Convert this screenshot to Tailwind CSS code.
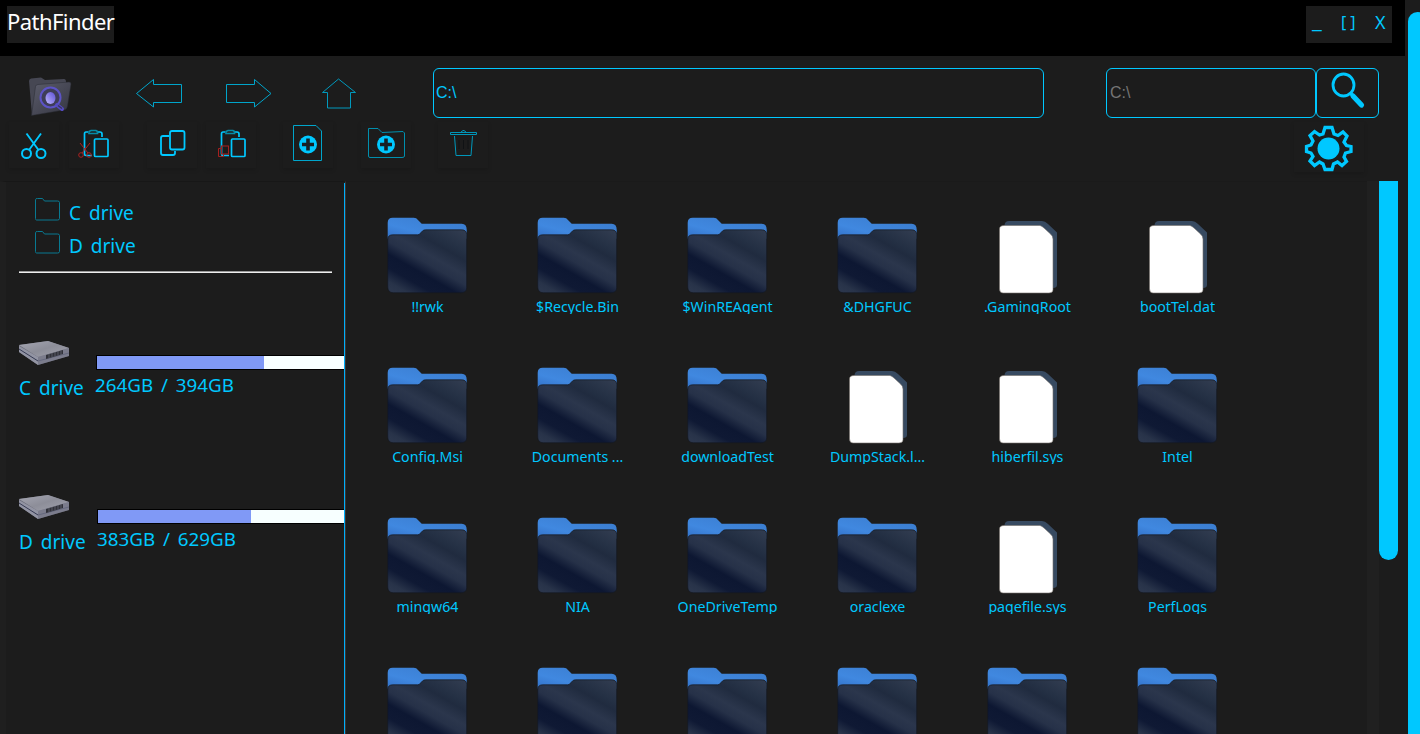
<!DOCTYPE html>
<html lang="en">
<head>
<meta charset="utf-8">
<title>PathFinder</title>
<script src="https://cdn.jsdelivr.net/npm/@tailwindcss/browser@4"></script>
</head>
<body class="flex h-[734px] w-[1420px] overflow-hidden bg-[#1c1c1c] font-['Noto_Sans',sans-serif] text-[#00c8ff]">
<!-- shared artwork -->
<svg class="absolute h-0 w-0">
  <defs>
    <linearGradient id="tab" x1="0" y1="1" x2="1" y2="0"><stop stop-color="#3270c6"/><stop offset=".35" stop-color="#4088e0"/><stop offset="1" stop-color="#397acb"/></linearGradient>
    <linearGradient id="front" gradientUnits="userSpaceOnUse" x1="60" y1="6" x2="18" y2="80"><stop stop-color="#303b4f"/><stop offset=".2" stop-color="#243044"/><stop offset=".28" stop-color="#202b3f"/><stop offset=".43" stop-color="#2b364c"/><stop offset=".53" stop-color="#263148"/><stop offset=".66" stop-color="#0d1732"/><stop offset=".8" stop-color="#0f1934"/><stop offset=".94" stop-color="#283349"/><stop offset="1" stop-color="#2b364c"/></linearGradient>
    <linearGradient id="drivetop" x1="0" y1="0" x2="1" y2="1"><stop stop-color="#a5a6b2"/><stop offset=".5" stop-color="#8d8e99"/><stop offset="1" stop-color="#a2a3ae"/></linearGradient>
    <linearGradient id="lens" x1="0" y1="1" x2="1" y2="0"><stop stop-color="#c0b9ff"/><stop offset="1" stop-color="#5b4ed4"/></linearGradient>
    <linearGradient id="logofront" x1="0" y1="0" x2="1" y2="1"><stop stop-color="#5b5c6a"/><stop offset="1" stop-color="#343541"/></linearGradient>
    <symbol id="folder" viewBox="0 0 82 78">
      <g transform="translate(-.3 .8)">
      <path d="M1 22V6Q1 1 6 1H27Q30 1 31 3L35 7H75Q80 7 80 13V22Z" fill="url(#tab)"/>
      <path d="M1 23Q1 18 6 18H31Q33 18 34 16L36 14Q37 13 39 13H75Q80 13 80 18V71Q80 76 74 76H7Q1 76 1 70Z" fill="url(#front)" stroke="#141821" stroke-width=".7"/>
      </g>
    </symbol>
    <symbol id="file" viewBox="0 0 82 78">
      <path d="M17.500 9Q18 5 22 5H55Q58 5 61 8L70 16.500V69Q70 72 66 72H18Z" fill="#374a61"/>
      <path d="M12.500 13Q12.500 9.500 17 9.500H53Q55 10 57 12L63.500 18Q66 20 66 23V74Q66 77 62 77H16Q12.500 77 12.500 73Z" fill="#fff" stroke="#77716c" stroke-width=".6"/>
    </symbol>
    <symbol id="smallfolder" viewBox="0 0 26 24">
      <path d="M.5 21.500V2.500Q.5 1.500 2.500 1.500H7.500L9.500 4H22.500Q24.500 4 24.500 5.500V21.500Q24.500 23 22.500 23H1.500Q.5 23 .5 21.500Z" fill="none" stroke="#087991" stroke-width="1"/>
    </symbol>
    <symbol id="drive" viewBox="19 340 50 26">
      <path d="M19 345L48 341L69 348V356L38 365L19 352Z" fill="#6b6c79"/>
      <path d="M19 345L48 341L69 348L38 357Z" fill="url(#drivetop)"/>
      <path d="M19 346V352L38 365V357Z" fill="#9294a3"/>
      <path d="M19 349L38 361L69 353" fill="none" stroke="#363a53"/>
      <path d="M38 357V365L69 356V348Z" fill="#85879a" opacity=".6"/>
      <path d="M46 355L63 350V354L46 359Z" fill="#303139"/>
      <path d="M49 354V358M52 353V357M55 352V356M58 351V355M61 351V355" stroke="#6c6d78" stroke-width=".7"/>
    </symbol>
    <symbol id="clipboard" viewBox="0 0 50 46">
      <g fill="none" stroke="#00c8ff" stroke-width="1.700">
        <path d="M19 10H17Q15.500 10 15.500 12V32Q15.500 33.500 17 33.500H23M29 10H31Q33 10 33 12V15"/>
        <rect x="25.500" y="17" width="13.500" height="17.500" rx="1"/>
        <path d="M20 11V9.500L22 8.500H27L28.500 9.500V11.500H20Z" stroke="#078ba7"/>
      </g>
    </symbol>
  </defs>
</svg>

<div class="flex w-[1405px] shrink-0 flex-col">
  <header class="flex h-14 shrink-0 items-start justify-between bg-black pt-1.5 pr-[13px] pl-[7px]">
    <h1 class="h-[37px] w-[107px] bg-[#1c1c1c] text-[22px] leading-[31px] tracking-[-0.55px] whitespace-nowrap text-white">PathFinder</h1>
    <div class="flex h-[37px] w-[86px] bg-[#1c1c1c] text-[16px] leading-[32px]">
      <span class="w-[29px] pl-1.5 text-[22px] leading-[26px]">_</span><span class="w-[37px] pl-1.5 tracking-[4px]">[]</span><span class="pl-[3px] text-[18px]">X</span>
    </div>
  </header>

  <div class="flex h-[125px] shrink-0 flex-col pt-3">
    <nav class="flex h-[50px] shrink-0">
      <svg class="ml-7 h-[50px] w-11" viewBox="28 68 44 50">
        <path d="M29 81Q29 79 31 78.500L41 77.500L45 80L64 79Q66 79 66 82V108L32 115Z" fill="#464753"/>
        <path d="M35.500 86.500Q36 84.500 38 84.500L69 82Q71 82 71 84L67.500 106Q67 109.500 64 110L31.500 115.500Z" fill="url(#logofront)" stroke="#292a33" stroke-width=".5"/>
        <circle cx="50.500" cy="97.500" r="10" fill="#3e3d58" stroke="#5c53c6" stroke-width="2"/>
        <ellipse cx="50.500" cy="98" rx="5" ry="6" fill="url(#lens)"/>
        <path d="M57 105L62 109" stroke="#554bc4" stroke-width="4" stroke-linecap="round"/><path d="M58 105.500L62 108.500" stroke="#393659" stroke-width="1.500"/>
      </svg>
      <svg class="ml-16 h-[50px] w-[47px]" viewBox="136 68 47 50"><path d="M136.500 93.500L153.500 79.500V84.500H181.500V102.500H153.500V107L136.500 93.500Z" fill="none" stroke="#00a5cb"/></svg>
      <svg class="ml-[42px] h-[50px] w-[47px]" viewBox="225 68 47 50"><path d="M271 93.500L254.500 79.500V84.500H226.500V102.500H254.500V107L271 93.500Z" fill="none" stroke="#00a5cb"/></svg>
      <svg class="ml-[50px] h-[50px] w-[35px]" viewBox="322 68 35 50"><path d="M338.500 79L355.500 92.500H350.500V108H327.500V92.500H322.500Z" fill="none" stroke="#0099bd"/></svg>
      <div class="ml-[76px] flex w-[611px] items-center rounded-md border border-[#00c8ff] pl-[2px] font-['Liberation_Sans',sans-serif] text-base">C:\</div>
      <div class="ml-[62px] flex w-[210px] items-center rounded-md border border-[#00c8ff] pl-[3px] font-['Liberation_Sans',sans-serif] text-base text-[#757575]">C:\</div>
      <div class="w-[63px] rounded-md border border-[#00c8ff]"><svg class="h-12 w-[61px]" viewBox="1317 69 61 48"><ellipse cx="1343.500" cy="85" rx="10.500" ry="11" fill="none" stroke="#00c8ff" stroke-width="2.800"/><path d="M1350.500 93L1353 96" stroke="#00c8ff" stroke-width="3.500"/><path d="M1353 96L1361.500 105" stroke="#00c8ff" stroke-width="5.200" stroke-linecap="round"/></svg></div>
    </nav>
    <div class="mt-1 flex h-[46px] shrink-0">
      <svg class="ml-[9px] h-[46px] w-[50px] shadow-[0_2px_4px_#00000022]" viewBox="9 122 50 46"><g fill="none" stroke="#00c8ff" stroke-width="2"><circle cx="26.500" cy="153.500" r="4.500"/><circle cx="41" cy="153.500" r="4.500"/><path d="M26.500 133.500L38.500 150M41 133.500L29 150" stroke-width="1.900"/></g></svg>
      <svg class="ml-[10px] h-[46px] w-[50px] shadow-[0_2px_4px_#00000022]" viewBox="0 0 50 46"><use href="#clipboard" width="50" height="46"/><g fill="none" stroke="#ad2020"><path d="M11 21L19 31M21 21L13 31"/><circle cx="12" cy="33" r="2.300"/><circle cx="20" cy="33" r="2.300"/></g></svg>
      <svg class="ml-[28px] h-[46px] w-[50px] shadow-[0_2px_4px_#00000022]" viewBox="147 122 50 46"><g fill="none" stroke="#00c8ff" stroke-width="1.800"><path d="M169 136H163Q161 136 161 138V153Q161 155 163 155H173Q175 155 175 153V151"/><rect x="170" y="131" width="14.500" height="18.500" rx="2"/></g></svg>
      <svg class="ml-[9px] h-[46px] w-[50px] shadow-[0_2px_4px_#00000022]" viewBox="0 0 50 46"><use href="#clipboard" width="50" height="46"/><g fill="none" stroke="#a52020"><path d="M16 26.500H12.500V34.500H17.500V32"/><rect x="15.500" y="24" width="7" height="8"/></g></svg>
      <svg class="ml-[27px] h-[46px] w-[50px] shadow-[0_2px_4px_#00000022]" viewBox="283 122 50 46"><path d="M293.500 125.500H316L321.500 131V160.500H293.500Z" fill="none" stroke="#00a5cb"/><circle cx="308" cy="144.500" r="9" fill="#00c8ff"/><path d="M308 138.500V150.500M302 144.500H314" stroke="#172126" stroke-width="3.600"/></svg>
      <svg class="ml-[28px] h-[46px] w-[50px] shadow-[0_2px_4px_#00000022]" viewBox="361 122 50 46"><path d="M368.500 156V128.500H378L382 132.500L403 131.500L404.500 133V156Q404.500 157.500 402 157.500H370Q368.500 157.500 368.500 156Z" fill="none" stroke="#008fae"/><circle cx="386" cy="144.500" r="9" fill="#00c8ff"/><path d="M386 138.500V150.500M380 144.500H392" stroke="#172126" stroke-width="3.600"/></svg>
      <svg class="ml-[27px] h-[46px] w-[50px] shadow-[0_2px_4px_#00000022]" viewBox="438 122 50 46"><g fill="none" stroke="#0097ba"><path d="M450.500 132.500H476.500V134.500H450.500ZM454.500 136L456 155.500H471L472.500 136M461 132L463 130.500H464L466 132"/><path d="M459 140V149M463.500 140V149M468 140V149" stroke="#101214"/></g></svg>
      <svg class="ml-[806px] h-[50px] w-[70px] shadow-[0_2px_4px_#00000022]" viewBox="1294 122 70 50"><circle cx="1328.500" cy="148.500" r="11" fill="#00c8ff"/><path d="M1325 127.500H1332L1334 134L1338 135.500L1343 132L1347 136L1344 142L1346.500 145.500L1351 146.500V151.500L1345.500 153L1344 157L1346.500 161.500L1342 165.500L1337.500 162L1333.500 164L1332 169.500H1325L1323 164L1319.500 162L1314.500 165.500L1310 161L1313 156.500L1311 153L1306.500 151.500V146.500L1311 145L1313 141L1310 135.500L1314.500 131.500L1319.500 135L1323 134Z" fill="none" stroke="#00c8ff" stroke-width="3.300"/></svg>
    </div>
  </div>

  <main class="flex min-h-0 flex-1">
    <aside class="flex w-[345px] shrink-0 flex-col border-t border-l-[6px] border-t-[#171717] border-l-[#1f1f1f] pt-px">
      <div class="flex min-h-0 flex-1 flex-col overflow-hidden border-r border-[#00aefa] pl-[13px] text-[19px] [word-spacing:3px]">
        <div class="mt-3.5 ml-4 flex h-[33px] items-start"><svg class="h-6 w-[26px]"><use href="#smallfolder"/></svg><span class="ml-2 leading-[32px]">C drive</span></div>
        <div class="ml-4 flex h-[33px] items-start"><svg class="h-6 w-[26px]"><use href="#smallfolder"/></svg><span class="ml-2 leading-[32px]">D drive</span></div>
        <div class="mt-2 h-[2px] w-[313px] shrink-0 border-t border-[#9a9a9a] bg-[#eeeeee]"></div>
        <section class="mt-[67px] flex h-[154px] shrink-0">
          <div class="w-[77px] shrink-0"><svg class="h-[26px] w-[50px]"><use href="#drive"/></svg><p class="mt-[7px] leading-[30px] whitespace-nowrap">C drive</p></div>
          <div class="flex-1"><div class="mt-[15px] h-[15px] w-[260px] border border-black bg-[#f7ffff]"><div class="h-full w-[167px] bg-[#8099f6]"></div></div><p class="-ml-px text-[18.800px] leading-[31px] whitespace-nowrap">264GB / 394GB</p></div>
        </section>
        <section class="flex h-[154px] shrink-0">
          <div class="w-[78px] shrink-0"><svg class="h-[26px] w-[50px]"><use href="#drive"/></svg><p class="mt-[7px] leading-[30px] whitespace-nowrap">D drive</p></div>
          <div class="flex-1"><div class="mt-[15px] h-[15px] w-[260px] border border-black bg-[#f7ffff]"><div class="h-full w-[153px] bg-[#8099f6]"></div></div><p class="text-[18.800px] leading-[31px] whitespace-nowrap">383GB / 629GB</p></div>
        </section>
      </div>
    </aside>
    <div class="w-[1022px] overflow-hidden border-t border-l border-t-[#1a1a1a] border-l-[#373737]">
      <div id="files" class="ml-[7px] grid w-[900px] auto-rows-[150px] grid-cols-6 pt-[34px]"></div>
    </div>
    <div class="w-3 bg-[#202020]"></div>
    <div class="w-[19px]"><div class="h-[379px] rounded-b-full bg-[#00c8ff]"></div></div>
  </main>
</div>
<div class="flex-1 pt-3 pl-[3px]"><div class="h-full w-[19px] rounded-t-[10px] bg-[#00c8ff]"></div></div>

<script>
const names = ["!!rwk","$Recycle.Bin","$WinREAgent","&DHGFUC",".GamingRoot","bootTel.dat","Config.Msi","Documents ...","downloadTest","DumpStack.l...","hiberfil.sys","Intel","mingw64","NIA","OneDriveTemp","oraclexe","pagefile.sys","PerfLogs"];
const plain = new Set([4,5,9,10,16]);
for (let i = 0; i < 24; i++) {
  const item = document.createElement("div");
  item.className = "flex flex-col items-center";
  item.innerHTML = '<svg class="h-[78px] w-[82px] shrink-0"><use href="#' + (plain.has(i) ? "file" : "folder") + '"/></svg><div class="h-5 overflow-hidden pr-px text-center text-[14.200px] leading-[26px] whitespace-nowrap"></div>';
  item.lastChild.textContent = names[i] || "";
  document.getElementById("files").append(item);
}
</script>
</body>
</html>
